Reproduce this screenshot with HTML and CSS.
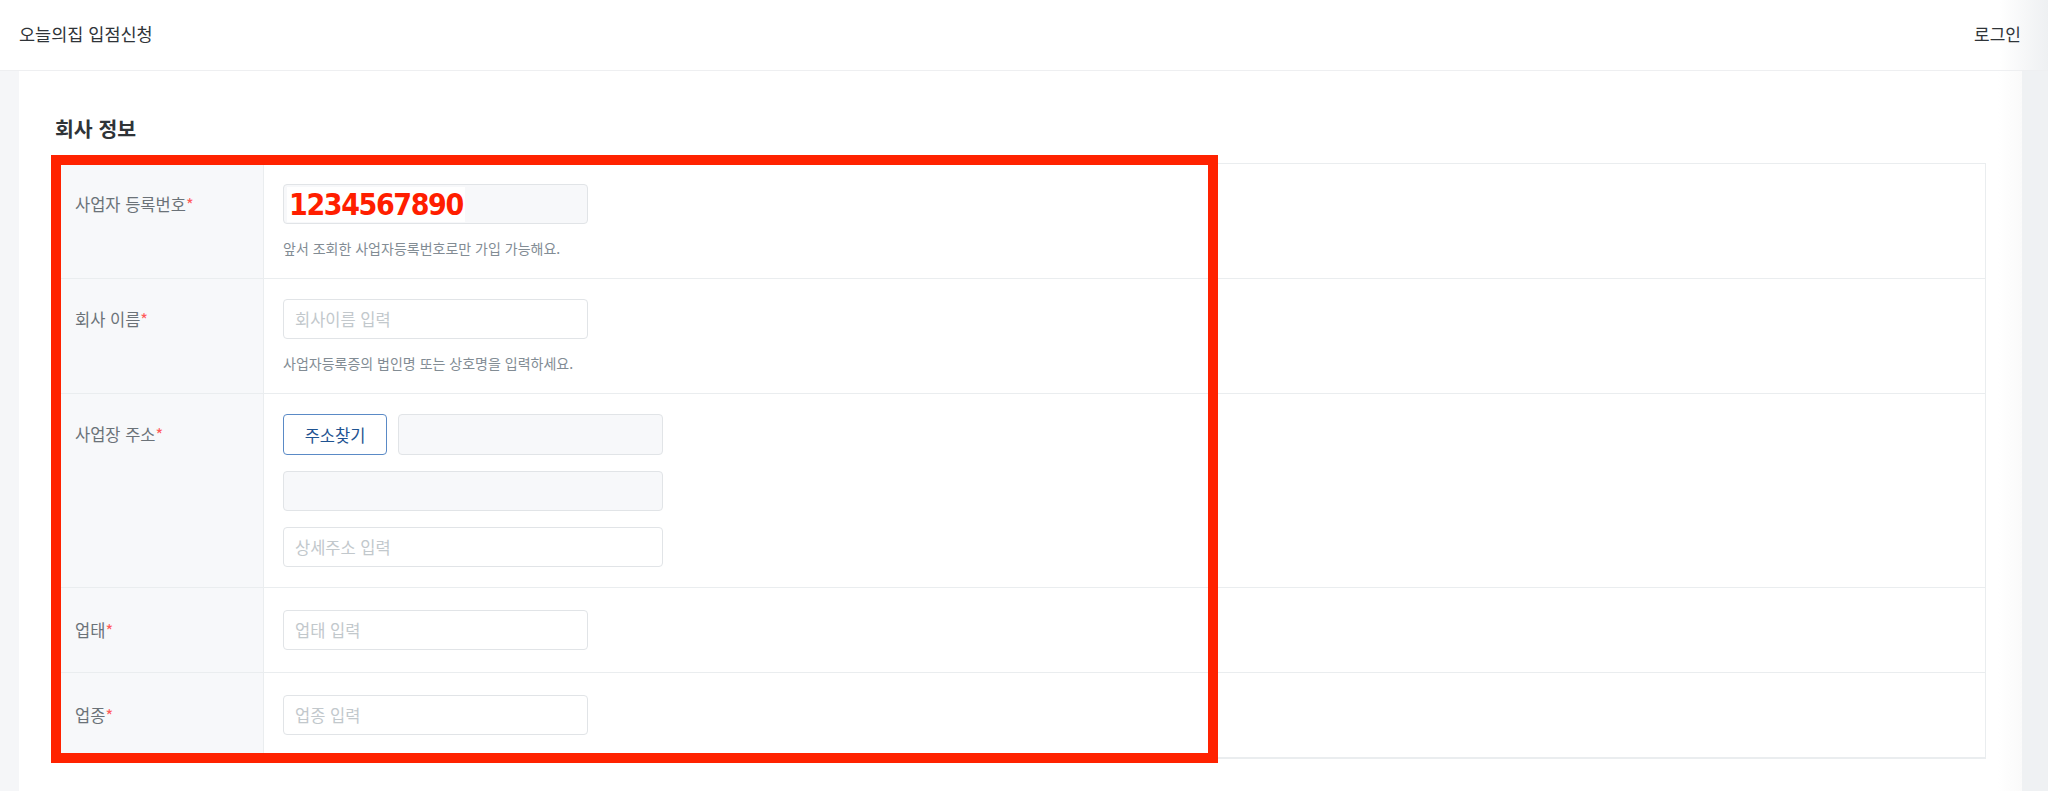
FILE: index.html
```html
<!DOCTYPE html>
<html lang="ko">
  <head>
    <meta charset="UTF-8" />
    <meta name="viewport" content="width=device-width, initial-scale=1.0" />
    <title>오늘의집 입점신청</title>
    <link rel="stylesheet" href="styles.css">
  </head>

  <body>
    <header class="topbar">
      <span class="brand">오늘의집 입점신청</span>
      <a class="login">로그인</a>
    </header>

    <main class="page">
      <section class="card">
        <h2 class="section-title">회사 정보</h2>

        <div class="form-table">
          <div class="form-row">
            <div class="form-label">사업자 등록번호<span class="req">*</span></div>
            <div class="form-field">
              <div class="input is-readonly value-box">
                <span class="value-mark">1234567890</span>
              </div>
              <p class="help">앞서 조회한 사업자등록번호로만 가입 가능해요.</p>
            </div>
          </div>

          <div class="form-row">
            <div class="form-label">회사 이름<span class="req">*</span></div>
            <div class="form-field">
              <input class="input" type="text" placeholder="회사이름 입력">
              <p class="help">사업자등록증의 법인명 또는 상호명을 입력하세요.</p>
            </div>
          </div>

          <div class="form-row">
            <div class="form-label">사업장 주소<span class="req">*</span></div>
            <div class="form-field">
              <div class="address">
                <div class="address-top">
                  <button class="btn-outline" type="button">주소찾기</button>
                  <input class="input is-readonly zip" type="text" readonly>
                </div>
                <input class="input is-readonly" type="text" readonly>
                <input class="input" type="text" placeholder="상세주소 입력">
              </div>
            </div>
          </div>

          <div class="form-row is-single">
            <div class="form-label">업태<span class="req">*</span></div>
            <div class="form-field">
              <input class="input" type="text" placeholder="업태 입력">
            </div>
          </div>

          <div class="form-row is-single">
            <div class="form-label">업종<span class="req">*</span></div>
            <div class="form-field">
              <input class="input" type="text" placeholder="업종 입력">
            </div>
          </div>

          <div class="mark-box"></div>
        </div>
      </section>
    </main>
  </body>
</html>
```

FILE: styles.css
```css
* {
  box-sizing: border-box;
}

body {
  margin: 0;
  font-family: "Noto Sans CJK KR", "Noto Sans", sans-serif;
  background-color: #f5f6f8;
  color: #2f3438;
}

.topbar {
  display: flex;
  justify-content: space-between;
  align-items: center;
  height: 71px;
  padding: 0 27px 4px 19px;
  background: linear-gradient(to right, #fff calc(100% - 48px), #eef0f2);
  border-bottom: 1px solid #eeeff1;
  font-size: 17.5px;
}

.login {
  color: #2f3438;
  font-size: 17px;
  cursor: pointer;
}

.page {
  padding-left: 19px;
  border-right: 26px solid #eff1f3;
}

.card {
  min-height: calc(100vh - 71px);
  padding: 42px 36px 40px;
  background: linear-gradient(to right, #fff calc(100% - 24px), #fafafa);
}

.section-title {
  margin: 0 0 20px;
  font-size: 20.5px;
  line-height: 30px;
  font-weight: 700;
  color: #2f3438;
}

.form-table {
  position: relative;
  border: 1px solid #eaedef;
  background: #fff;
}

.form-row {
  display: grid;
  grid-template-columns: 208px 1fr;
  border-bottom: 1px solid #eaedef;
}

.form-row:last-of-type {
  border-bottom: none;
}

.form-label {
  padding: 20px 19px;
  background: #f7f8fa;
  border-right: 1px solid #eaedef;
  font-size: 16.5px;
  line-height: 40px;
  color: #6b7278;
}

.req {
  color: #ff5b5b;
}

.form-field {
  padding: 20px 19px;
}

.is-single .form-label,
.is-single .form-field {
  padding-top: 22px;
  padding-bottom: 22px;
}

.input {
  display: block;
  width: 305px;
  height: 40px;
  padding: 0 11px;
  border: 1px solid #e1e4e7;
  border-radius: 4px;
  background: #fff;
  font-family: inherit;
  font-size: 16.5px;
  color: #2f3438;
  outline: none;
}

.input::placeholder {
  color: #c2c8cc;
}

.input.is-readonly {
  background: #f7f8fa;
}

.value-box {
  display: flex;
  align-items: center;
  padding: 0 3px;
}

.value-mark {
  padding: 0 2px;
  background: #fff;
  color: #ff1e00;
  font-family: "DejaVu Sans Condensed", "DejaVu Sans", sans-serif;
  font-stretch: condensed;
  font-weight: 700;
  font-size: 30px;
  line-height: 35px;
  letter-spacing: -1.4px;
}

.help {
  margin: 14px 0 0;
  font-size: 14px;
  line-height: 20px;
  color: #828c94;
}

.address {
  display: flex;
  flex-direction: column;
  gap: 16px;
  width: 380px;
}

.address .input {
  width: 100%;
}

.address-top {
  display: flex;
  gap: 11px;
}

.address-top .input {
  flex: 1;
  height: 41px;
}

.btn-outline {
  flex: none;
  width: 104px;
  height: 41px;
  border: 1px solid #5a8ac6;
  border-radius: 4px;
  background: #fff;
  color: #1f5391;
  font-family: inherit;
  font-size: 16.5px;
  cursor: pointer;
}

.mark-box {
  position: absolute;
  left: -5px;
  top: -9px;
  width: 1167px;
  height: 608px;
  border: 10px solid #ff2200;
  pointer-events: none;
}
```
